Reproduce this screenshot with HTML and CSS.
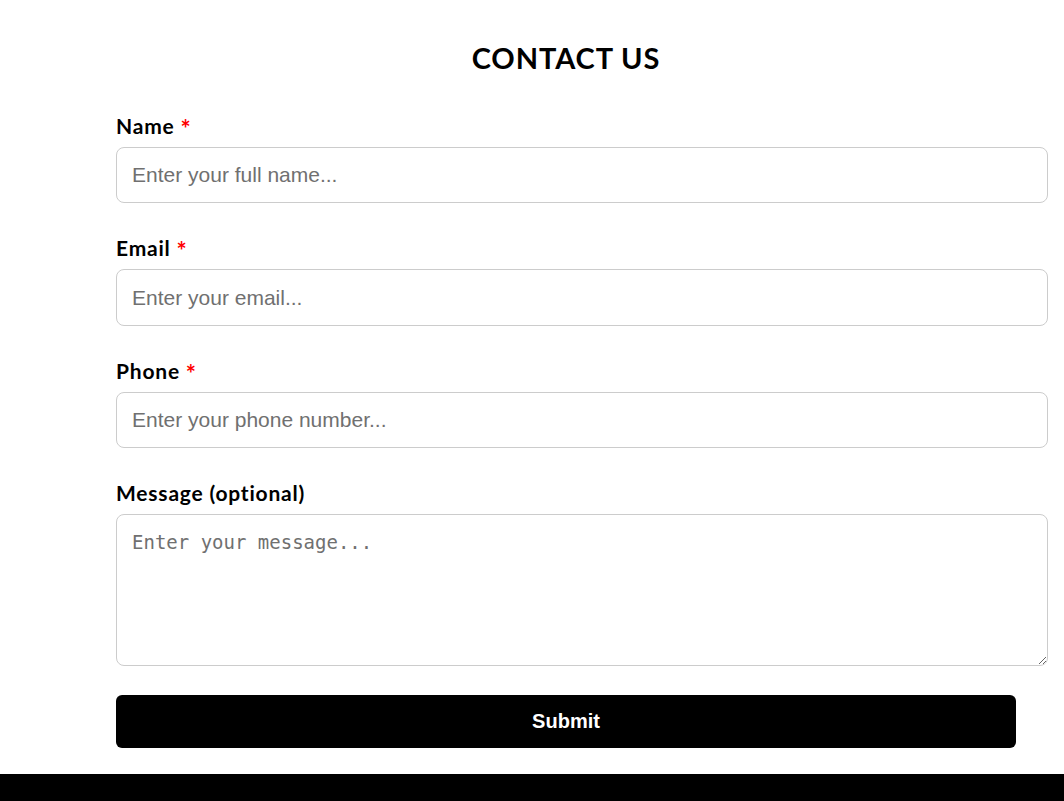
FILE: index.html
```html
<!DOCTYPE html>
<html lang="en">
<head>
<meta charset="utf-8">
<title>Contact Us</title>
<link rel="stylesheet" href="styles.css">
</head>
<body>
<main class="page">
  <form class="contact">
    <h1 class="title">CONTACT US</h1>
    <div class="field">
      <label class="label" for="name">Name <span class="req">*</span></label>
      <input class="input" id="name" type="text" placeholder="Enter your full name...">
    </div>
    <div class="field">
      <label class="label" for="email">Email <span class="req">*</span></label>
      <input class="input" id="email" type="email" placeholder="Enter your email...">
    </div>
    <div class="field">
      <label class="label" for="phone">Phone <span class="req">*</span></label>
      <input class="input" id="phone" type="tel" placeholder="Enter your phone number...">
    </div>
    <div class="field">
      <label class="label" for="message">Message (optional)</label>
      <textarea class="textarea" id="message" placeholder="Enter your message..."></textarea>
    </div>
    <button class="submit" type="button">Submit</button>
  </form>
</main>
<footer class="footer"></footer>
</body>
</html>
```
FILE: styles.css
```css
html, body {
  margin: 0;
  padding: 0;
  background: #fff;
}
body {
  font-family: "Lato", "Open Sans", sans-serif;
  color: #000;
  height: 801px;
  display: flex;
  flex-direction: column;
  overflow: hidden;
}
.page {
  flex: 1;
}
.contact {
  width: 900px;
  margin-left: 116px;
  padding-top: 37.8px;
  display: flex;
  flex-direction: column;
}
.title {
  margin: 0 0 37px;
  font-size: 29px;
  line-height: 40px;
  font-weight: 700;
  letter-spacing: 0.9px;
  text-align: center;
}
.field {
  display: flex;
  flex-direction: column;
  margin-bottom: 34px;
}
.field:last-of-type {
  margin-bottom: 29px;
}
.label {
  display: block;
  height: 22px;
  font-size: 21px;
  line-height: 22px;
  font-weight: 700;
  letter-spacing: 0.8px;
  margin-bottom: 10px;
}
.req {
  color: #ff0000;
  font-size: 24px;
  line-height: 0;
  letter-spacing: 0;
  vertical-align: -4px;
}
.input, .textarea {
  box-sizing: border-box;
  width: calc(100% + 32px);
  border: 1px solid #cccccc;
  border-radius: 8px;
  padding: 0 15px;
  background: #fff;
  color: #000;
  margin: 0;
  outline: none;
}
.input {
  height: 56.5px;
  font-family: "Liberation Sans", Arial, sans-serif;
  font-size: 21px;
}
.textarea {
  height: 152px;
  padding-top: 16px;
  font-family: "DejaVu Sans Mono", monospace;
  font-size: 19px;
  resize: vertical;
}
.input::placeholder, .textarea::placeholder {
  color: #707070;
}
.submit {
  height: 53px;
  width: 100%;
  border: none;
  border-radius: 6px;
  background: #000;
  color: #fff;
  font-family: "Liberation Sans", Arial, sans-serif;
  font-weight: 700;
  font-size: 20px;
  cursor: pointer;
}
.footer {
  height: 27px;
  background: #000;
}
```
